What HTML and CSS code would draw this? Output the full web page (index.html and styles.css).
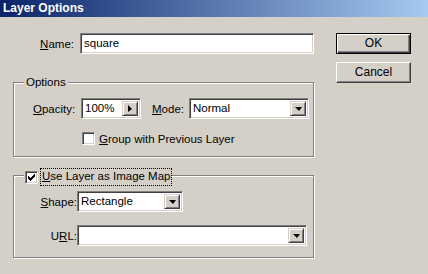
FILE: index.html
```html
<!DOCTYPE html>
<html>
<head>
    <link rel="stylesheet" href="styles.css">
</head>
<body>
    <div class="window">
        <div class="titlebar">Layer Options</div>

        <div class="client">
            <div class="main">
                <div class="name-row">
                    <label class="lbl name-lbl"><u>N</u>ame:</label>
                    <div class="field name-field">square</div>
                </div>

                <div class="group options">
                    <span class="legend">Options</span>
                    <div class="opacity-row">
                        <label class="lbl opacity-lbl"><u>O</u>pacity:</label>
                        <div class="field opacity-field">
                            <span class="val">100%</span>
                            <span class="btn spin"><i class="tri-right"></i></span>
                        </div>
                        <label class="lbl mode-lbl"><u>M</u>ode:</label>
                        <div class="field combo mode-combo">
                            <span class="val">Normal</span>
                            <span class="btn drop"><i class="tri-down"></i></span>
                        </div>
                    </div>
                    <div class="check-row">
                        <span class="check"></span>
                        <span class="check-text"><u>G</u>roup with Previous Layer</span>
                    </div>
                </div>

                <div class="group imagemap">
                    <div class="legend check-legend">
                        <span class="check checked">
                            <svg width="7" height="7" viewBox="0 0 7 7"><path d="M0 2h1v1h1v1h1V3h1V2h1V1h1V0h1v3H6v1H5v1H4v1H3v1H2V6H1V5H0z" fill="#000"/></svg>
                        </span>
                        <span class="focus"><u>U</u>se Layer as Image Map</span>
                    </div>
                    <div class="shape-row">
                        <label class="lbl map-lbl"><u>S</u>hape:</label>
                        <div class="field combo shape-combo">
                            <span class="val">Rectangle</span>
                            <span class="btn drop"><i class="tri-down"></i></span>
                        </div>
                    </div>
                    <div class="url-row">
                        <label class="lbl map-lbl">U<u>R</u>L:</label>
                        <div class="field combo url-combo">
                            <span class="val"></span>
                            <span class="btn drop"><i class="tri-down"></i></span>
                        </div>
                    </div>
                </div>
            </div>

            <div class="buttons">
                <div class="button default">OK</div>
                <div class="button">Cancel</div>
            </div>
        </div>
    </div>
</body>
</html>
```

FILE: styles.css
```css
body {
    margin: 0;
    background: #d4d0c8;
    font-family: "Liberation Sans", Arial, sans-serif;
    font-size: 11.5px;
    color: #000;
}

u {
    text-decoration: underline;
    text-underline-offset: 1px;
}

.window {
    width: 428px;
    height: 274px;
    background: #d4d0c8;
}

.titlebar {
    height: 17px;
    line-height: 17px;
    padding-left: 3px;
    color: #fff;
    font-size: 12px;
    font-weight: bold;
    background: linear-gradient(to right, #0a246a, #a6caf0);
}

.client {
    display: flex;
    padding: 16px 0 0 13px;
}

.main {
    width: 301px;
}

.lbl {
    flex: none;
}

/* sunken edit field */
.field {
    position: relative;
    box-sizing: border-box;
    height: 21px;
    background: #fff;
    border: 1px solid;
    border-color: #808080 #fff #fff #808080;
    box-shadow: inset 1px 1px 0 #404040, inset -1px -1px 0 #d4d0c8;
    padding: 0 0 0 3px;
    line-height: 19px;
    white-space: nowrap;
}

.btn {
    position: absolute;
    top: 2px;
    right: 2px;
    bottom: 2px;
    width: 16px;
    box-sizing: border-box;
    background: #d4d0c8;
    border: 1px solid;
    border-color: #d4d0c8 #404040 #404040 #d4d0c8;
    box-shadow: inset 1px 1px 0 #fff, inset -1px -1px 0 #808080;
    display: flex;
    align-items: center;
    justify-content: center;
}

.tri-down {
    width: 0;
    height: 0;
    border-left: 4px solid transparent;
    border-right: 3px solid transparent;
    border-top: 4px solid #000;
    margin-top: 1px;
}

.tri-right {
    width: 0;
    height: 0;
    border-top: 4px solid transparent;
    border-bottom: 3px solid transparent;
    border-left: 4px solid #000;
}

.name-row {
    display: flex;
    align-items: center;
}

.name-lbl {
    width: 61px;
    text-align: right;
    margin-right: 6px;
}

.name-field {
    flex: 1;
}

/* etched group box */
.group {
    position: relative;
    box-sizing: border-box;
    border: 1px solid #808080;
    box-shadow: inset 1px 1px 0 #fff, 1px 1px 0 #fff;
}

.legend {
    position: absolute;
    top: -7px;
    left: 10px;
    padding: 0 2px;
    background: #d4d0c8;
    line-height: 13px;
}

.options {
    margin-top: 28px;
    height: 75px;
    padding: 15px 0 0 19px;
}

.opacity-row {
    display: flex;
    align-items: center;
}

.opacity-lbl {
    width: 48px;
}

.opacity-field {
    width: 60px;
}

.mode-lbl {
    margin-left: 11px;
    width: 37px;
}

.mode-combo {
    width: 120px;
}

.check-row {
    display: flex;
    align-items: center;
    margin: 13px 0 0 49px;
}

.check {
    flex: none;
    box-sizing: border-box;
    width: 13px;
    height: 13px;
    background: #fff;
    border: 1px solid;
    border-color: #808080 #fff #fff #808080;
    box-shadow: inset 1px 1px 0 #404040, inset -1px -1px 0 #d4d0c8;
    display: flex;
    align-items: center;
    justify-content: center;
}

.check-text {
    margin-left: 4px;
}

.imagemap {
    margin-top: 18px;
    height: 83px;
    padding: 15px 0 0 22px;
}

.check-legend {
    display: flex;
    align-items: center;
    top: -7px;
    left: 10px;
    padding: 0 1px 0 1px;
}

.focus {
    margin-left: 3px;
    padding: 1px 1px 2px 1px;
    outline: 1px dotted #000;
    line-height: 13px;
}

.shape-row,
.url-row {
    display: flex;
    align-items: center;
}

.url-row {
    margin-top: 13px;
}

.map-lbl {
    width: 41px;
    text-align: right;
}

.shape-combo {
    width: 106px;
}

.url-combo {
    width: 230px;
}

.buttons {
    display: flex;
    flex-direction: column;
    gap: 8px;
    margin-left: 22px;
}

.button {
    box-sizing: border-box;
    width: 75px;
    height: 21px;
    line-height: 19px;
    text-align: center;
    background: #d4d0c8;
    border: 1px solid;
    border-color: #fff #404040 #404040 #fff;
    box-shadow: inset -1px -1px 0 #808080;
    font-size: 12px;
}

.button.default {
    border-color: #000;
    box-shadow: inset 1px 1px 0 #fff, inset -1px -1px 0 #404040, inset -2px -2px 0 #808080;
}
```
